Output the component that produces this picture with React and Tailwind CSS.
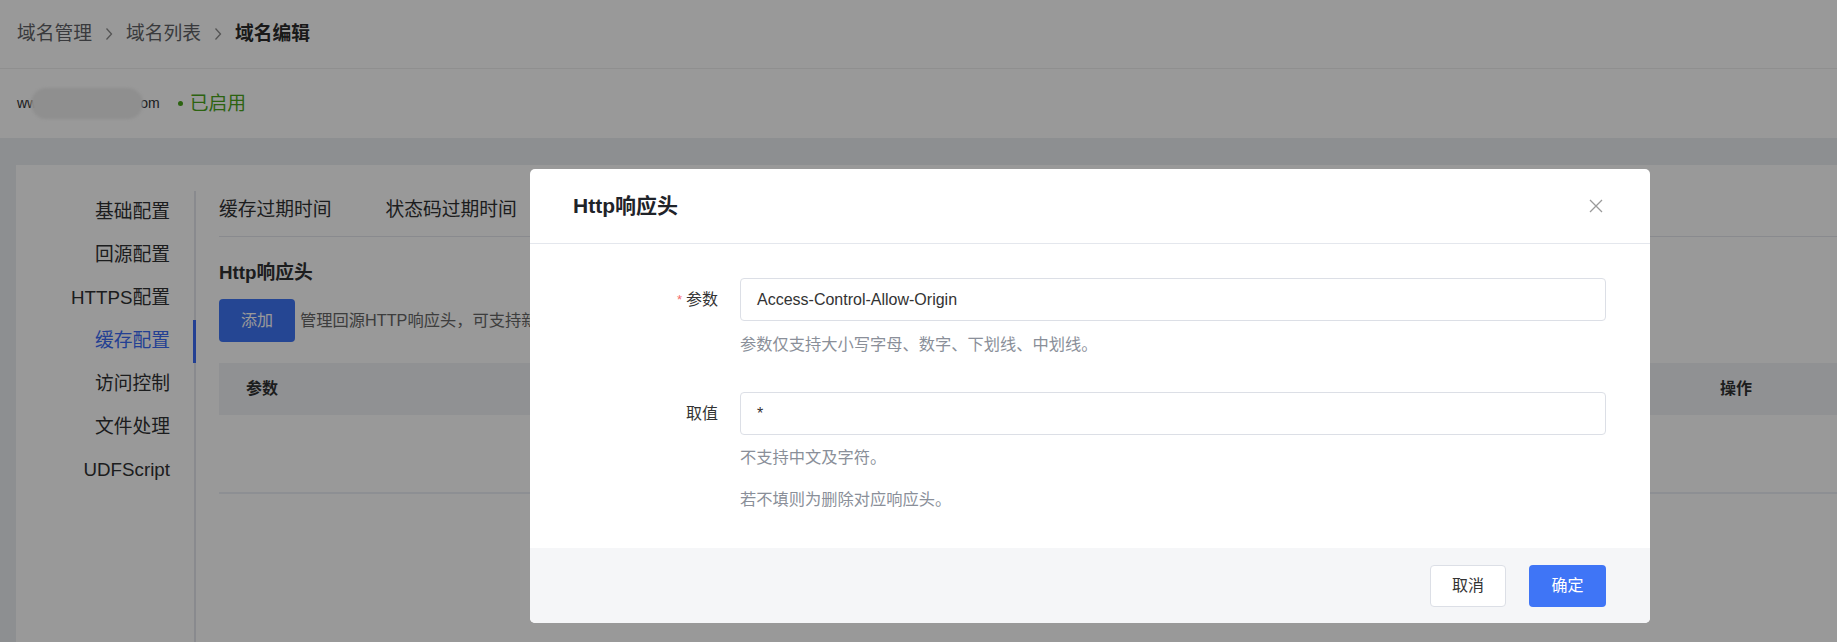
import React from "react";

function Chevron() {
  return (
    <svg width="8" height="14" viewBox="0 0 8 14" className="mx-[13px]">
      <path d="M1.5 1.5L6.5 7L1.5 12.5" stroke="#8c8c8c" strokeWidth="1.3" fill="none" />
    </svg>
  );
}

const menu = ["基础配置", "回源配置", "HTTPS配置", "缓存配置", "访问控制", "文件处理", "UDFScript"];
const tabs = ["缓存过期时间", "状态码过期时间"];

export default function App() {
  return (
    <div className="relative h-[642px] w-full overflow-hidden bg-[#eceef2] font-['Liberation_Sans','Noto_Sans_CJK_SC',sans-serif] flex flex-col">
      {/* top bars */}
      <div className="bg-white shrink-0">
        <div className="h-[69px] flex items-center pl-[17px] border-b border-[#eeeeee] text-[18.75px] leading-[24px]">
          <span className="text-[#606266]">域名管理</span>
          <Chevron />
          <span className="text-[#606266]">域名列表</span>
          <Chevron />
          <span className="text-[#2b2b2b] font-bold">域名编辑</span>
        </div>
        <div className="h-[69px] flex items-center pl-[17px]">
          <span className="text-[14px] text-[#303133]">ww</span>
          <span className="-ml-[6px] -mr-[3px] w-[112px] h-[31px] rounded-full bg-[#eeeeee] blur-[1.5px]"></span>
          <span className="text-[14px] text-[#303133]">om</span>
          <span className="ml-[18px] w-[5px] h-[5px] rounded-full bg-[#4aa51c]"></span>
          <span className="ml-[7px] text-[18.75px] leading-[24px] text-[#4aa51c]">已启用</span>
        </div>
      </div>

      {/* card */}
      <div className="flex-1 pl-4 pt-[27px] flex">
        <div className="flex-1 bg-white flex">
          <div className="w-[180px] shrink-0 pt-[26px] flex">
            <div className="flex-1 border-r-2 border-[#e4e7ed]">
              {menu.map((m, i) => (
                <div
                  key={m}
                  className={
                    i === 3
                      ? "relative h-[43px] flex items-center justify-end pr-[24px] text-[18.75px] text-[#3b6cf6]"
                      : "relative h-[43px] flex items-center justify-end pr-[24px] text-[18.75px] text-[#303133]"
                  }
                >
                  {m}
                  {i === 3 && <span className="absolute right-[-2px] top-0 h-full w-[3px] bg-[#3b6cf6]"></span>}
                </div>
              ))}
            </div>
          </div>

          <div className="flex-1 pl-[23px] pt-[26px] flex flex-col">
            <div className="h-[46px] pb-[6px] flex items-center gap-[54px] border-b border-[#e4e7ed] text-[18.75px] text-[#303133]">
              {tabs.map((t) => (
                <span key={t}>{t}</span>
              ))}
            </div>
            <div className="mt-[24px] text-[18.75px] leading-[24px] font-bold text-[#303133]">Http响应头</div>
            <div className="mt-[14px] flex items-center">
              <button className="w-[76px] h-[43px] rounded-[4px] bg-[#3f75f6] text-white text-[16px]">添加</button>
              <span className="ml-[5px] text-[16.25px] text-[#666666]">管理回源HTTP响应头，可支持新增、修改、删除HTTP响应头。</span>
            </div>
            <div className="mt-[21px] h-[52px] bg-[#f0f2f5] flex items-center text-[16px] font-bold text-[#303133]">
              <span className="flex-1 pl-[27px]">参数</span>
              <span className="w-[117px]">操作</span>
            </div>
            <div className="h-[79px] border-b-2 border-[#ebeef5]"></div>
          </div>
        </div>
      </div>

      {/* overlay */}
      <div className="absolute inset-0 bg-black/40"></div>

      {/* modal */}
      <div className="absolute left-[530px] top-[169px] w-[1120px] bg-white rounded-[5px] overflow-hidden">
        <div className="h-[75px] flex items-center justify-between pl-[43px] pr-[47px] border-b border-[#e4e7ed]">
          <span className="text-[21px] leading-[26px] font-bold text-[#1f2329]">Http响应头</span>
          <svg width="14" height="14" viewBox="0 0 14 14">
            <path d="M1 1L13 13M13 1L1 13" stroke="#9a9a9a" strokeWidth="1.3" fill="none" />
          </svg>
        </div>
        <div className="pt-[34px] pb-[38px] pr-[44px] text-[16px]">
          <div className="flex items-start">
            <div className="w-[188px] h-[43px] flex items-center justify-end text-[#333333]">
              <span className="text-[#f56c6c] mr-[4px] text-[13px]">*</span>
              参数
            </div>
            <div className="ml-[22px] flex-1">
              <div className="h-[43px] border border-[#dcdfe6] rounded-[4px] flex items-center pl-[16px] text-[#333333]">
                Access-Control-Allow-Origin
              </div>
              <div className="mt-[12px] leading-[22px] text-[16.25px] text-[#8a8f99]">参数仅支持大小写字母、数字、下划线、中划线。</div>
            </div>
          </div>
          <div className="mt-[37px] flex items-start">
            <div className="w-[188px] h-[43px] flex items-center justify-end text-[#333333]">取值</div>
            <div className="ml-[22px] flex-1">
              <div className="h-[43px] border border-[#dcdfe6] rounded-[4px] flex items-center pl-[16px] text-[#333333]">
                *
              </div>
              <div className="mt-[11px] leading-[22px] text-[16.25px] text-[#8a8f99]">不支持中文及字符。</div>
              <div className="mt-[20px] leading-[22px] text-[16.25px] text-[#8a8f99]">若不填则为删除对应响应头。</div>
            </div>
          </div>
        </div>
        <div className="h-[75px] bg-[#f5f6f8] flex items-center justify-end gap-[23px] pr-[44px]">
          <button className="w-[76px] h-[42px] rounded-[4px] border border-[#dcdfe6] bg-white text-[16px] text-[#333333]">取消</button>
          <button className="w-[77px] h-[42px] rounded-[4px] bg-[#3f75f6] text-[16px] text-white">确定</button>
        </div>
      </div>
    </div>
  );
}
